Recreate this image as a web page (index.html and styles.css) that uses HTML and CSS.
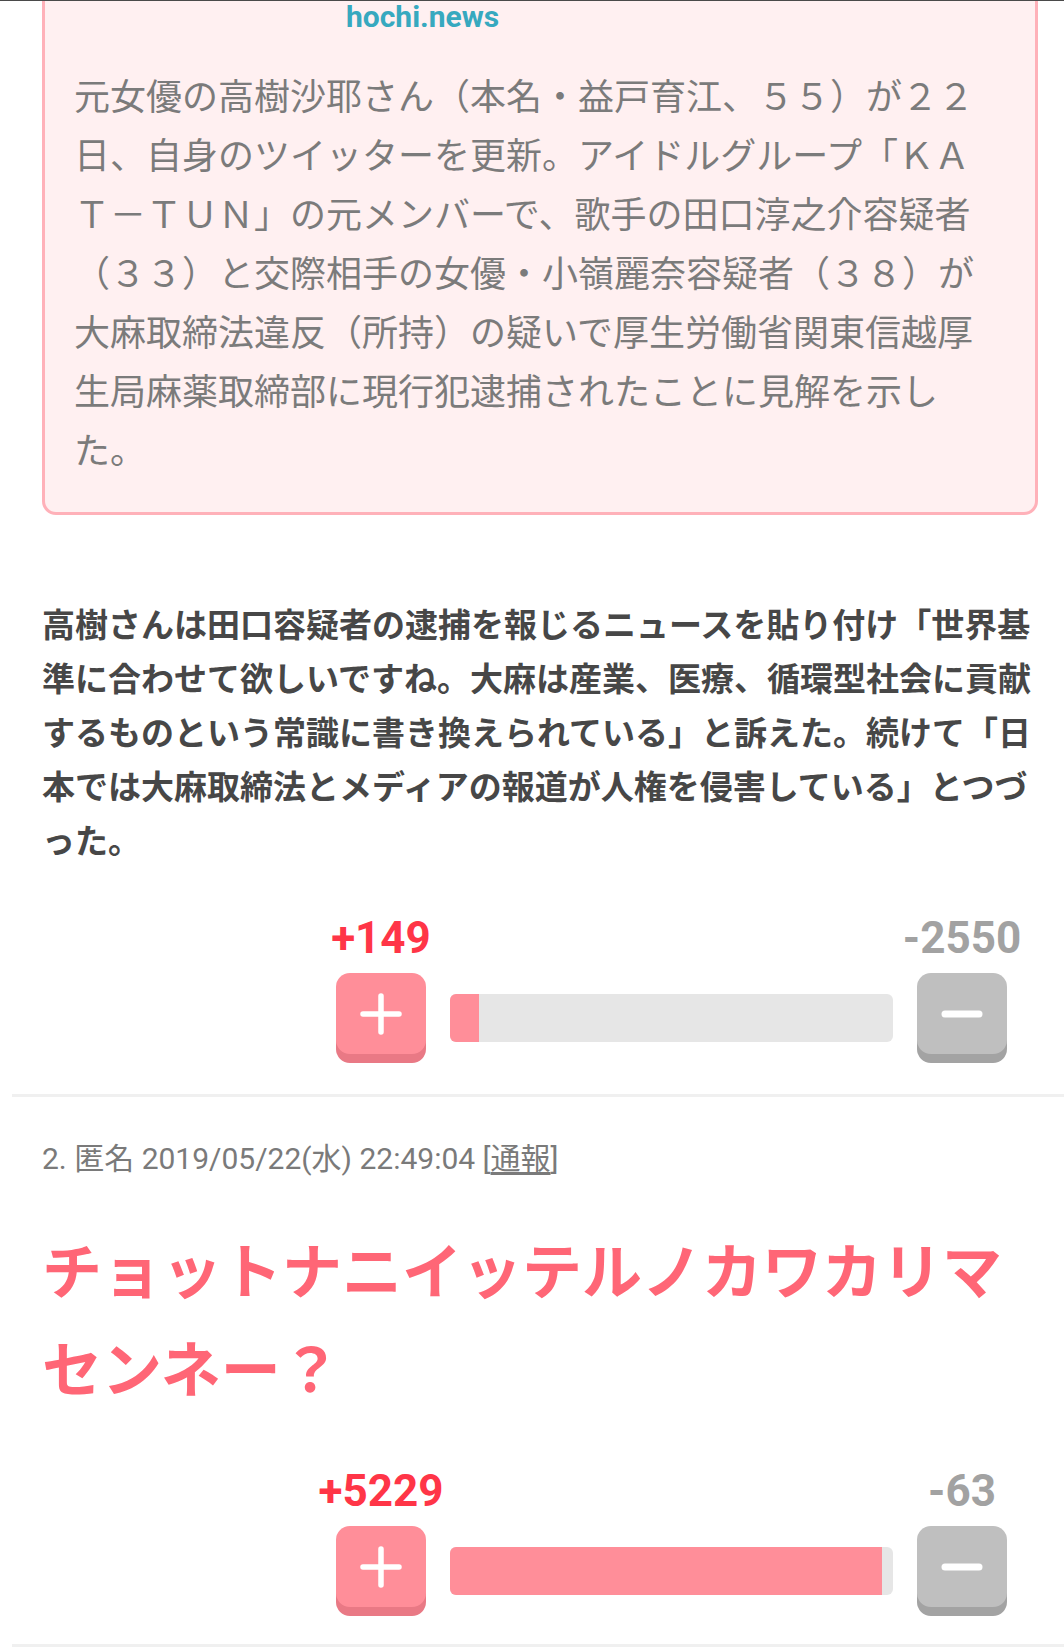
FILE: index.html
```html
<!DOCTYPE html>
<html lang="ja">
<head>
<meta charset="utf-8">
<title>comments</title>
<link rel="stylesheet" href="styles.css">
</head>
<body>
<div class="topbar"></div>
<div class="thread">
  <section class="comment first">
    <div class="quote">
      <div class="source">hochi.news</div>
      <p class="quote-text">元女優の高樹沙耶さん（本名・益戸育江、５５）が２２日、自身のツイッターを更新。アイドルグループ「ＫＡＴ－ＴＵＮ」の元メンバーで、歌手の田口淳之介容疑者（３３）と交際相手の女優・小嶺麗奈容疑者（３８）が大麻取締法違反（所持）の疑いで厚生労働省関東信越厚生局麻薬取締部に現行犯逮捕されたことに見解を示した。</p>
    </div>
    <p class="body-text">高樹さんは田口容疑者の逮捕を報じるニュースを貼り付け「世界基準に合わせて欲しいですね。大麻は産業、医療、循環型社会に貢献するものという常識に書き換えられている」と訴えた。続けて「日本では大麻取締法とメディアの報道が人権を侵害している」とつづった。</p>
    <div class="vote">
      <div class="count plus-count"><span>+149</span></div>
      <div></div>
      <div class="count minus-count"><span>-2550</span></div>
      <button class="btn btn-plus" type="button" aria-label="plus">
        <svg width="42" height="42" viewBox="0 0 42 42"><path d="M21 3V39M3 21H39" stroke="#fff" stroke-width="5.5" stroke-linecap="round" fill="none"/></svg>
      </button>
      <div class="bar"><div class="fill" style="width:6.6%"></div></div>
      <button class="btn btn-minus" type="button" aria-label="minus">
        <svg width="42" height="42" viewBox="0 0 42 42"><path d="M4 21H38" stroke="#fff" stroke-width="7" stroke-linecap="round" fill="none"/></svg>
      </button>
    </div>
  </section>
  <section class="comment second">
    <div class="meta">2. 匿名 2019/05/22(水) 22:49:04 [<a class="report" href="#">通報</a>]</div>
    <p class="big-text">チョットナニイッテルノカワカリマセンネー？</p>
    <div class="vote">
      <div class="count plus-count"><span>+5229</span></div>
      <div></div>
      <div class="count minus-count"><span>-63</span></div>
      <button class="btn btn-plus" type="button" aria-label="plus">
        <svg width="42" height="42" viewBox="0 0 42 42"><path d="M21 3V39M3 21H39" stroke="#fff" stroke-width="5.5" stroke-linecap="round" fill="none"/></svg>
      </button>
      <div class="bar"><div class="fill" style="width:97.5%"></div></div>
      <button class="btn btn-minus" type="button" aria-label="minus">
        <svg width="42" height="42" viewBox="0 0 42 42"><path d="M4 21H38" stroke="#fff" stroke-width="7" stroke-linecap="round" fill="none"/></svg>
      </button>
    </div>
  </section>
</div>
</body>
</html>
```
FILE: styles.css
```css
html, body {
  margin: 0;
  padding: 0;
  background: #ffffff;
}
body {
  font-family: Roboto, "Noto Sans CJK JP", sans-serif;
  overflow: hidden;
}
.topbar {
  position: fixed;
  top: 0;
  left: 0;
  right: 0;
  height: 1px;
  background: #4a4a4a;
  z-index: 5;
}
.comment {
  margin-left: 12px;
  padding: 0 26px 31px 30px;
  border-bottom: 3px solid #f0f0f0;
}
.comment.second {
  padding-top: 42px;
  padding-bottom: 28px;
}
.quote {
  margin-top: -40px;
  border: 3px solid #ffb1b9;
  border-radius: 14px;
  background: #fff0f1;
  padding: 36px 29px 34px 29px;
}
.source {
  font-family: Roboto, sans-serif;
  font-weight: 700;
  font-size: 30px;
  line-height: 36px;
  color: #37a9bf;
  padding-left: 272px;
}
.quote-text {
  margin: 30px 0 0 0;
  font-family: "Noto Sans CJK JP", sans-serif;
  font-size: 36px;
  line-height: 59px;
  color: #7b7b7b;
  letter-spacing: 0;
}
.body-text {
  margin: 81px 0 0 0;
  font-family: "Noto Sans CJK JP", sans-serif;
  font-weight: 700;
  font-size: 33px;
  line-height: 54px;
  color: #474747;
}
.meta {
  font-family: Roboto, "Noto Sans CJK JP", sans-serif;
  font-size: 30px;
  line-height: 40px;
  color: #7a7a7a;
}
.report {
  color: #7a7a7a;
  text-decoration: underline;
  text-underline-offset: 3px;
}
.big-text {
  margin: 40px 0 0 0;
  font-family: "Noto Sans CJK JP", sans-serif;
  font-weight: 700;
  font-size: 60px;
  line-height: 98px;
  color: #ff6676;
}
.vote {
  display: grid;
  grid-template-columns: 90px 1fr 90px;
  column-gap: 24px;
  row-gap: 9px;
  align-items: center;
  margin: 46px 31px 0 294px;
}
.second .vote {
  margin-top: 50px;
}
.count {
  display: flex;
  justify-content: center;
  font-family: Roboto, sans-serif;
  font-weight: 700;
  font-size: 44px;
  line-height: 52px;
  white-space: nowrap;
}
.plus-count { color: #ff3547; }
.minus-count { color: #a2a2a2; }
.btn {
  display: flex;
  align-items: center;
  justify-content: center;
  width: 90px;
  height: 81px;
  margin: 0 0 9px 0;
  padding: 0;
  border: none;
  border-radius: 14px;
  cursor: pointer;
}
.btn svg { display: block; }
.btn-plus {
  background: #ff8e99;
  box-shadow: 0 9px 0 #e97985;
}
.btn-minus {
  background: #bfbfbf;
  box-shadow: 0 9px 0 #a3a3a3;
}
.bar {
  height: 48px;
  border-radius: 6px;
  background: #e6e6e6;
  overflow: hidden;
}
.fill {
  height: 100%;
  background: #ff8e99;
}
```
